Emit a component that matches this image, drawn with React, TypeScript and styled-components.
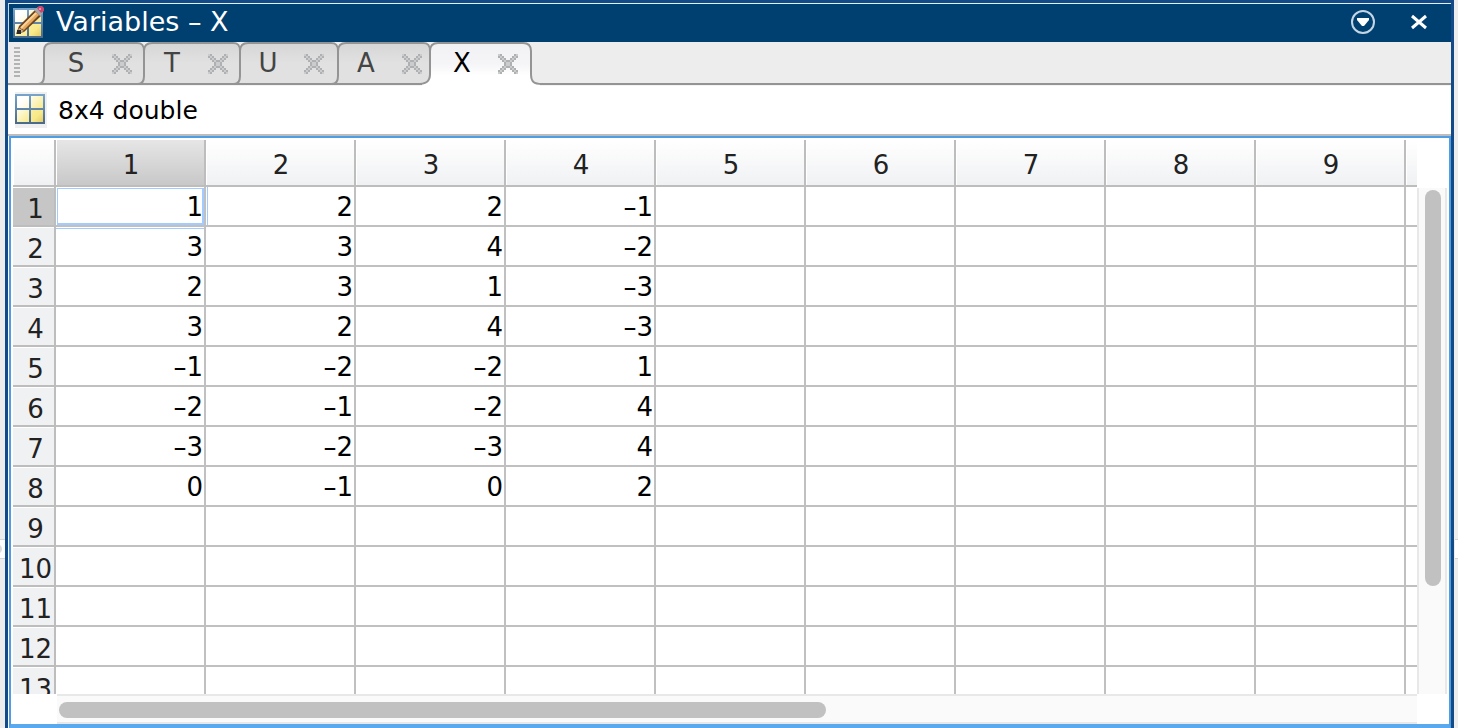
import React from "react";
import styled, { createGlobalStyle, css } from "styled-components";

const GlobalStyle = createGlobalStyle`
  * { box-sizing: border-box; }
  html, body, #root { height: 100%; margin: 0; }
  body {
    background: #ededed;
    font-family: "DejaVu Sans", "Lucida Grande", sans-serif;
    font-size: 26px;
    line-height: 32px;
    overflow: hidden;
  }
  button { font: inherit; border: 0; padding: 0; background: none; }
`;

const Frame = styled.div`
  position: relative;
  height: 100vh;
  padding: 0 4px 0 5px;
`;

const EdgeNotch = styled.span<{ $side: "left" | "right" }>`
  position: absolute;
  top: 539px;
  height: 20px;
  background: #fff;
  border: solid #d4d4d4;
  border-width: 1px 0;
  overflow: hidden;
  ${(p) => (p.$side === "left" ? css`left: 0; width: 5px;` : css`right: 0; width: 3px;`)}

  &::after {
    content: "";
    display: ${(p) => (p.$side === "left" ? "block" : "none")};
    width: 10px;
    height: 10px;
    margin: 4px 0 0 -8px;
    border-radius: 50%;
    background: #dcdcdc;
  }
`;

const Panel = styled.main`
  height: 100%;
  display: flex;
  flex-direction: column;
  background: #fff;
  border: solid #134b88;
  border-width: 3px 3px 0;
`;

const TitleBar = styled.header`
  display: flex;
  align-items: center;
  height: 39px;
  padding: 0 20px 2px 4px;
  border-top: 1px solid #e3f0fa;
  border-left: 1px solid #c9d8e6;
  background: #004071;
  color: #fff;
`;

const Title = styled.h1`
  flex: 1;
  margin: 0 0 0 12px;
  font-size: 27px;
  line-height: 32px;
  font-weight: 400;
`;

const TitleActions = styled.div`
  display: flex;
  align-items: center;
  gap: 32px;
`;

const IconButton = styled.button`
  display: flex;
`;

const TabStrip = styled.nav`
  display: flex;
  height: 44px;
  flex: none;
  padding-left: 5px;
  background: linear-gradient(#ededed 41px, #949494 41px 43px, #f4f4f4 43px);
`;

const Grip = styled.span`
  width: 6px;
  height: 30px;
  margin: 5px 24px 0 1px;
  background: repeating-linear-gradient(#b3b3b3 0 2px, #ededed 2px 4px);
`;

const TabItem = styled.div<{ $width: number; $lead: number; $active?: boolean }>`
  position: relative;
  display: flex;
  align-items: center;
  gap: 27px;
  width: ${(p) => p.$width}px;
  height: 44px;
  padding: 0 0 2px ${(p) => p.$lead}px;
  color: ${(p) => (p.$active ? "#000" : "#444")};
  z-index: ${(p) => (p.$active ? 1 : 0)};
`;

const TabShape = styled.svg`
  position: absolute;
  top: 0;
  left: -14px;
  overflow: visible;
`;

const TabLabel = styled.button`
  position: relative;
  width: 18px;
  display: flex;
  justify-content: center;
  color: inherit;
`;

const TabClose = styled.button`
  position: relative;
  display: flex;
  padding-top: 2px;
`;

const InfoBar = styled.div`
  display: flex;
  align-items: center;
  gap: 11px;
  height: 50px;
  flex: none;
  padding-left: 7px;
  border-bottom: 2px solid #bdbdbd;
  font-size: 25px;
`;

const InfoText = styled.span`
  padding-top: 2px;
`;

const IconTile = styled.span`
  display: flex;
  width: 32px;
  height: 36px;
  padding-top: 2px;
  background: #efefef;
`;

const GridPane = styled.section`
  flex: 1;
  min-height: 0;
  display: grid;
  grid-template-columns: minmax(0, 1fr) 30px;
  grid-template-rows: minmax(0, 1fr) 30px;
  margin-left: 1px;
  padding: 2px 2px 0;
  border: 2px solid #4f9ee3;
  border-bottom: 4px solid #5aa9ef;
`;

const Viewport = styled.div`
  overflow: hidden;
`;

const Sheet = styled.table`
  table-layout: fixed;
  width: 1543px;
  border-collapse: separate;
  border-spacing: 0;
`;

const HeadCell = styled.th<{ $selected?: boolean; $width?: number }>`
  width: ${(p) => p.$width ?? 150}px;
  height: 47px;
  padding: 4px 0 0 2px;
  border-right: 2px solid #bdbdbd;
  border-bottom: 2px solid #bdbdbd;
  box-shadow: inset 1px 0 #fff;
  background: ${(p) => (p.$selected ? "linear-gradient(#e6e6e6, #c8c8c8)" : "linear-gradient(#fff, #f0f1f3)")};
  color: #222;
  font-weight: 400;
`;

const RowHead = styled.th<{ $selected?: boolean }>`
  height: 40px;
  padding: 6px 0 0 4px;
  border-right: 2px solid #bdbdbd;
  border-bottom: 2px solid #bdbdbd;
  box-shadow: inset 0 1px #fff;
  background: ${(p) => (p.$selected ? "#c6c6c6" : "#f0f1f3")};
  color: #222;
  font-weight: 400;
`;

const Cell = styled.td<{ $mark?: "selected" | "right" | "below" }>`
  height: 40px;
  padding: 2px 1px 0 0;
  border-right: 2px solid #c0c0c0;
  border-bottom: 2px solid #c0c0c0;
  text-align: right;
  color: #000;
  ${(p) =>
    p.$mark === "selected" &&
    css`box-shadow: inset 1px 1px #fff, inset 2px 2px #a4cbff, inset -2px -2px #a4cbff;`}
  ${(p) => p.$mark === "right" && css`box-shadow: inset 1px 0 #fff, inset 2px 0 #a4cbff;`}
  ${(p) => p.$mark === "below" && css`box-shadow: inset 0 1px #fff, inset 0 2px #a4cbff;`}
`;

const VerticalTrack = styled.div`
  margin-top: 48px;
  padding: 2px 4px 0 6px;
  border: solid #e8e8e8;
  border-width: 0 2px;
  background: #fafafa;
`;

const HorizontalTrack = styled.div`
  margin-left: 44px;
  padding: 6px 0 0 2px;
  border: solid #e8e8e8;
  border-width: 2px 0;
  background: #fafafa;
`;

const Thumb = styled.div<{ $vertical?: boolean }>`
  border-radius: 8px;
  background: #c1c1c1;
  ${(p) => (p.$vertical ? css`width: 16px; height: 78.6%;` : css`height: 16px; width: 56.5%;`)}
`;

const MatrixIcon = ({ pencil }: { pencil?: boolean }) => (
  <svg width={pencil ? 31 : 30} height={pencil ? 32 : 30} viewBox={pencil ? "0 -2 31 32" : "0 0 30 30"} aria-hidden="true">
    <defs>
      <linearGradient id="frame" x1="0" y1="0" x2="0" y2="1">
        <stop offset="0" stopColor="#78a4cc" />
        <stop offset="1" stopColor="#48698a" />
      </linearGradient>
      <linearGradient id="paneA" x1="0" y1="0" x2="1" y2="1">
        <stop offset="0.4" stopColor="#fff" />
        <stop offset="1" stopColor="#fdf8d4" />
      </linearGradient>
      <linearGradient id="paneB" x1="0" y1="0" x2="1" y2="1">
        <stop offset="0" stopColor="#fffce8" />
        <stop offset="1" stopColor="#f8ea8c" />
      </linearGradient>
      <linearGradient id="paneC" x1="0" y1="0" x2="1" y2="1">
        <stop offset="0" stopColor="#faee98" />
        <stop offset="0.5" stopColor="#f8e98a" />
        <stop offset="1" stopColor="#e5cb68" />
      </linearGradient>
    </defs>
    <path d="M0 0H30V30H0Z" fill="url(#frame)" />
    <path d="M2 2H14V14H2Z" fill="url(#paneA)" />
    <path d="M16 2H28V14H16Z" fill="url(#paneB)" />
    <path d="M2 16H14V28H2Z" fill="url(#paneB)" />
    <path d="M16 16H28V28H16Z" fill="url(#paneC)" />
    {pencil && (
      <g>
        <path d="M3 26L6 18L22 2L28 8L11 24Z" fill="#6f4520" />
        <path d="M7 20L23 4L26 7L11 22Z" fill="#e4a95f" />
        <path d="M8 20L23 5" stroke="#f8d49a" strokeWidth="2" />
        <path d="M6 20L11 23L4 26Z" fill="#d3b48a" />
        <path d="M4 22H8V26H4Z" fill="#2b2b30" />
        <path d="M21 2L25 -1L30 4L27 8Z" fill="#a9a6a8" />
        <path d="M24 0L26 -2H29L31 0V3L28 5Z" fill="#c94870" />
        <path d="M26 0H28V2H26Z" fill="#ee8fae" />
      </g>
    )}
  </svg>
);

const steps = Array.from({ length: 10 }, (_, i) => i);

const closeCells = steps.flatMap((x) =>
  steps.map((y) => ({ x, y, distance: Math.min(Math.abs(x - y), Math.abs(x + y - 9)) })),
);

const cellsAt = (distance: number) =>
  closeCells
    .filter((cell) => cell.distance === distance)
    .map((cell) => `M${cell.x * 2} ${cell.y * 2}h2v2h-2z`)
    .join("");

const CloseGlyph = () => (
  <svg width="20" height="20" viewBox="0 0 20 20" shapeRendering="crispEdges" aria-hidden="true">
    <path d={cellsAt(0)} fill="#cbccce" />
    <path d={cellsAt(1)} fill="#aeb0b2" />
  </svg>
);

const TabOutline = ({ width, active }: { width: number; active?: boolean }) => {
  const r = width + 14;
  const line = active
    ? `M0 42C10 42 14 40 14 32V9C14 3 17 1 22 1H${r - 7}C${r - 2} 1 ${r + 1} 3 ${r + 1} 9V32C${r + 1} 40 ${r + 4} 42 ${r + 12} 42H${r + 20}`
    : `M0 42H8C12 42 14 39 14 34V9C14 3 17 1 22 1H${r - 7}C${r - 2} 1 ${r} 3 ${r} 9V34C${r} 39 ${r + 2} 42 ${r + 8} 42`;
  return (
    <TabShape width={width + 28} height="44" aria-hidden="true">
      <defs>
        <linearGradient id={active ? "tabOn" : "tabOff"} x1="0" y1="0" x2="0" y2="1">
          <stop offset="0" stopColor={active ? "#f1f1f4" : "#d6d6d6"} />
          <stop offset="0.5" stopColor={active ? "#f5f5f8" : "#e1e1e1"} />
          <stop offset="0.8" stopColor={active ? "#fff" : "#e1e1e1"} />
        </linearGradient>
      </defs>
      {active && <path d={`M6 41H${r + 10}V44H6Z`} fill="#fff" />}
      <path d={line} fill={`url(#${active ? "tabOn" : "tabOff"})`} />
      <path d={line} fill="none" stroke="#949494" strokeWidth="2" />
      {!active && <path d={`M0 42H${r}`} stroke="#949494" strokeWidth="2" />}
    </TabShape>
  );
};

const tabs = [
  { name: "S", width: 100, lead: 23 },
  { name: "T", width: 96, lead: 19 },
  { name: "U", width: 98, lead: 19 },
  { name: "A", width: 92, lead: 19 },
  { name: "X", width: 100, lead: 23, active: true },
];

const values = [
  [1, 2, 2, -1],
  [3, 3, 4, -2],
  [2, 3, 1, -3],
  [3, 2, 4, -3],
  [-1, -2, -2, 1],
  [-2, -1, -2, 4],
  [-3, -2, -3, 4],
  [0, -1, 0, 2],
];

const columns = Array.from({ length: 10 }, (_, i) => i);
const rows = Array.from({ length: 13 }, (_, i) => i);

const format = (value?: number) =>
  value === undefined ? "" : value < 0 ? `–${-value}` : String(value);

const markFor = (row: number, column: number) => {
  if (row === 0 && column === 0) return "selected";
  if (row === 0 && column === 1) return "right";
  if (row === 1 && column === 0) return "below";
  return undefined;
};

export default function App() {
  return (
    <Frame>
      <GlobalStyle />
      <EdgeNotch $side="left" />
      <EdgeNotch $side="right" />
      <Panel>
        <TitleBar>
          <MatrixIcon pencil />
          <Title>Variables – X</Title>
          <TitleActions>
            <IconButton aria-label="Panel actions">
              <svg width="24" height="24" viewBox="0 0 24 24" aria-hidden="true">
                <circle cx="12" cy="12" r="11" fill="none" stroke="#c4d5e3" strokeWidth="2" />
                <path d="M6 8H18V10L13 16H11L6 10Z" fill="#fff" />
              </svg>
            </IconButton>
            <IconButton aria-label="Close panel">
              <svg width="24" height="16" viewBox="0 0 24 16" aria-hidden="true">
                <path d="M5 2L19 14M19 2L5 14" stroke="#fff" strokeWidth="3" />
              </svg>
            </IconButton>
          </TitleActions>
        </TitleBar>
        <TabStrip>
          <Grip />
          {tabs.map((tab) => (
            <TabItem key={tab.name} $width={tab.width} $lead={tab.lead} $active={tab.active}>
              <TabOutline width={tab.width} active={tab.active} />
              <TabLabel aria-current={tab.active ? "page" : undefined}>{tab.name}</TabLabel>
              <TabClose aria-label={`Close ${tab.name}`}>
                <CloseGlyph />
              </TabClose>
            </TabItem>
          ))}
        </TabStrip>
        <InfoBar>
          <IconTile>
            <MatrixIcon />
          </IconTile>
          <InfoText>8x4 double</InfoText>
        </InfoBar>
        <GridPane>
          <Viewport>
            <Sheet>
              <thead>
                <tr>
                  <HeadCell as="td" $width={43} />
                  {columns.map((column) => (
                    <HeadCell key={column} scope="col" $selected={column === 0}>
                      {column < 9 ? column + 1 : ""}
                    </HeadCell>
                  ))}
                </tr>
              </thead>
              <tbody>
                {rows.map((row) => (
                  <tr key={row}>
                    <RowHead scope="row" $selected={row === 0}>
                      {row + 1}
                    </RowHead>
                    {columns.map((column) => (
                      <Cell key={column} $mark={markFor(row, column)}>
                        {format(values[row]?.[column])}
                      </Cell>
                    ))}
                  </tr>
                ))}
              </tbody>
            </Sheet>
          </Viewport>
          <VerticalTrack>
            <Thumb $vertical />
          </VerticalTrack>
          <HorizontalTrack>
            <Thumb />
          </HorizontalTrack>
        </GridPane>
      </Panel>
    </Frame>
  );
}
